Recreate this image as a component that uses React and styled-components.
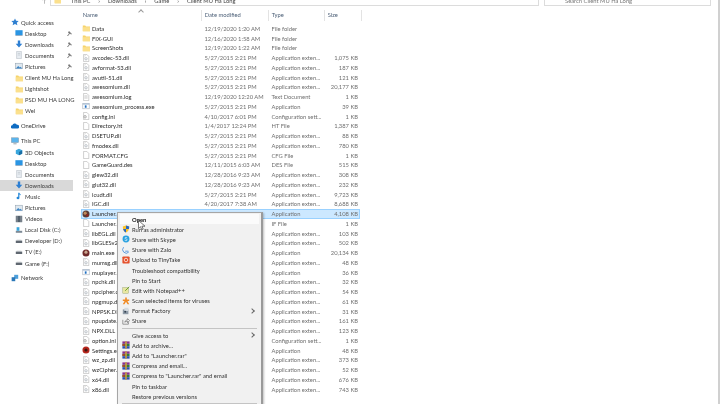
import React from "react";
import styled, { createGlobalStyle } from "styled-components";

const GlobalStyle = createGlobalStyle`
  html, body { margin: 0; padding: 0; background: #fff; }
  body { font-family: Lato, "Noto Sans", sans-serif; }
`;

const Frame = styled.div`
  position: relative;
  width: 720px;
  height: 404px;
  overflow: hidden;
  background: #fff;
  filter: blur(0.35px);
  font-size: 5.8px;
  color: #2b2b2b;
  border-right: 2px solid #d0d0d0;
  box-sizing: border-box;
`;

const TopBar = styled.div`
  display: flex;
  height: 6px;
  padding: 0 7px 0 42px;
  gap: 5px;
  overflow: hidden;
`;

const UpArrow = styled.span`
  width: 3px;
  line-height: 1px;
  color: #777;
`;

const AddressBar = styled.div`
  flex: 1;
  display: flex;
  align-items: flex-start;
  gap: 8px;
  padding: 0 4px 0 3px;
  border: solid #dcdcdc;
  border-width: 0 1px 1px 1px;
  color: #444;
  line-height: 1px;
  height: 5px;
  overflow: hidden;
`;

const CrumbIcon = styled.span`
  display: flex;
  margin: -3px 2px 0 0;
`;

const SearchBox = styled(AddressBar)`
  flex: 0 0 141px;
  padding-left: 20px;
  color: #777;
`;

const Main = styled.div`
  display: flex;
  height: 398px;
`;

const Sidebar = styled.nav`
  flex: 0 0 73px;
  min-width: 0;
  padding-top: 10.5px;
`;

const NavRow = styled.div`
  display: flex;
  align-items: center;
  gap: 2px;
  height: 11.1px;
  margin-top: ${p => p.$gap || 0}px;
  padding-left: ${p => (p.$top ? 11 : 15)}px;
  background: ${p => (p.$active ? "#d9d9d9" : "transparent")};
  white-space: nowrap;
  position: relative;
  color: #3a3a3a;
`;

const Pin = styled.svg`
  position: absolute;
  left: 67px;
  top: 3px;
`;

const Content = styled.section`
  flex: 1;
  min-width: 0;
  padding-left: 8px;
`;

const HeaderRow = styled.div`
  display: grid;
  grid-template-columns: 121px 67px 56px 37px;
  height: 14.5px;
  align-items: end;
  position: relative;
  color: #4d6078;
`;

const HeaderCell = styled.div`
  height: 11px;
  line-height: 10px;
  padding-left: ${p => (p.$first ? 1.7 : 2.7)}px;
  border-right: 1px solid #e3e3e3;
`;

const SortCaret = styled.span`
  position: absolute;
  left: 58px;
  top: 3.5px;
  width: 3px;
  height: 3px;
  border: solid #999;
  border-width: 1px 0 0 1px;
  transform: rotate(45deg);
`;

const FileList = styled.div`
  padding-top: 3px;
`;

const FileRow = styled.div`
  display: grid;
  grid-template-columns: 121px 67px 56px 35px;
  align-items: center;
  width: 279px;
  height: 9.76px;
  box-sizing: border-box;
  white-space: nowrap;
  color: #6f6f6f;
  background: ${p => (p.$selected ? "#cce8ff" : "transparent")};
  outline: ${p => (p.$selected ? "1px solid #99d1ff" : "none")};
  outline-offset: -1px;
`;

const NameCell = styled.div`
  display: flex;
  align-items: center;
  gap: 2px;
  padding-left: 1px;
  color: #2b2b2b;
`;

const Cell = styled.div`
  padding-left: 2.5px;
  overflow: hidden;
`;

const SizeCell = styled.div`
  text-align: right;
  padding-right: 2px;
`;

const Menu = styled.div`
  position: absolute;
  left: 117px;
  top: 212px;
  width: 146px;
  height: 200px;
  box-sizing: border-box;
  padding: 1px 2px;
  background: #f1f1f1;
  border: 1px solid #a6a6a6;
  border-right: 2px solid #9a9a9a;
  box-shadow: 1px 1px 2px rgba(0, 0, 0, 0.25);
`;

const MenuItem = styled.div`
  display: flex;
  align-items: center;
  height: 10.2px;
  position: relative;
  padding-left: 12px;
  white-space: nowrap;
  color: ${p => (p.$strong ? "#111" : "#333")};
  font-weight: ${p => (p.$strong ? 700 : 400)};
  background: ${p => (p.$strong ? "#fbfbfb" : "transparent")};
`;

const MenuIconSlot = styled.span`
  position: absolute;
  left: 2px;
  top: 1px;
  display: flex;
`;

const SubArrow = styled.span`
  position: absolute;
  right: 5px;
  top: 3px;
  width: 3px;
  height: 3px;
  border: solid #666;
  border-width: 1px 1px 0 0;
  transform: rotate(45deg);
`;

const MenuLine = styled.div`
  height: 1px;
  margin: 1.5px 2px;
  background: #c4c4c4;
`;

const Cursor = styled.svg`
  position: absolute;
  left: 138px;
  top: 220px;
`;

const iconPaths = {
  folder: <><path d="M1 2h3l1 1h5v6H1z" fill="#f6d36b" /><path d="M1 4h9v5H1z" fill="#fbe08d" /></>,
  dll: <><path d="M2 .5h4l2.5 2.5v6.5H2z" fill="#fff" stroke="#a9a9a9" strokeWidth=".7" /><circle cx="5" cy="6" r="1.5" fill="none" stroke="#9aa3ad" strokeWidth=".8" /><path d="M3 2h2M3 3.5h1" stroke="#bbb" strokeWidth=".5" /></>,
  file: <path d="M2 .5h4l2.5 2.5v6.5H2z" fill="#fff" stroke="#a9a9a9" strokeWidth=".7" />,
  text: <><path d="M2 .5h4l2.5 2.5v6.5H2z" fill="#fff" stroke="#a9a9a9" strokeWidth=".7" /><path d="M3 3.5h4M3 5h4M3 6.5h4" stroke="#999" strokeWidth=".5" /></>,
  app: <><rect x="1" y="2" width="8" height="6.5" fill="#fff" stroke="#9fa9b5" strokeWidth=".7" /><path d="M1 2h8v1.2H1z" fill="#9fb6cf" /><rect x="3.5" y="4.2" width="2.2" height="3" fill="#1f6fc2" /></>,
  ini: <><path d="M2 .5h4l2.5 2.5v6.5H2z" fill="#fff" stroke="#a9a9a9" strokeWidth=".7" /><circle cx="3.8" cy="6" r="1.7" fill="#ddd" stroke="#888" strokeWidth=".6" /></>,
  game: <><circle cx="5" cy="5" r="4.4" fill="#5a3d36" /><circle cx="4" cy="4" r="2" fill="#c08a5c" /><circle cx="6.5" cy="6.5" r="1.5" fill="#94251c" /></>,
  mainexe: <><circle cx="5" cy="5" r="4.4" fill="#702b2b" /><circle cx="5" cy="4" r="2" fill="#c8a48d" /></>,
  settings: <><circle cx="5" cy="5" r="4.4" fill="#b5261c" /><circle cx="5" cy="5" r="2" fill="#3b1512" /></>,
  star: <path d="M5 .5l1.4 3 3.2.3-2.4 2.1.8 3.3L5 7.4 2 9.2l.8-3.3L.4 3.8l3.2-.3z" fill="#2f7fd0" />,
  desktop: <><rect x=".5" y="1.5" width="9" height="6" fill="#2a95e3" /><rect x=".5" y="7.5" width="9" height="1" fill="#7f9db8" /></>,
  downloads: <path d="M3.5 .5h3v4.2h2.6L5 9.3.9 4.7h2.6z" fill="#2d7fd3" />,
  documents: <><path d="M2 .5h6v9H2z" fill="#e8edf2" stroke="#a8b2bc" strokeWidth=".6" /><path d="M3.5 3h3M3.5 5h3" stroke="#a8b2bc" strokeWidth=".6" /></>,
  pictures: <><rect x=".5" y="1.5" width="9" height="7" fill="#dfe8ef" stroke="#8a98a6" strokeWidth=".6" /><path d="M1 8l3-3 2 2 1-1 2 2z" fill="#3c84c4" /></>,
  cloud: <path d="M1.5 8a2 2 0 0 1 .2-4A3 3 0 0 1 7.300 3.500 2.300 2.300 0 0 1 8.500 8z" fill="#0f6cc2" />,
  pc: <><rect x=".5" y="1" width="9" height="6" fill="#5bb4ec" stroke="#7d8a96" strokeWidth=".5" /><path d="M3 8.500h4" stroke="#7d8a96" /></>,
  cube: <><path d="M5 .8l4 2v4.400l-4 2-4-2V2.800z" fill="#3aa6dc" /><path d="M5 5v4.200l4-2V2.800z" fill="#1a6ea5" /></>,
  music: <path d="M4 1h1.500c.3 1.300 2 1.500 2 3.300-.6-.7-1.200-1-2-1.100V7.500A1.800 1.500 0 1 1 4 6z" fill="#2487d8" />,
  videos: <><rect x="1" y="1" width="8" height="8" fill="#53606c" /><path d="M2 2h1v1H2zM2 4.500h1v1H2zM2 7h1v1H2zM7 2h1v1H7zM7 4.500h1v1H7zM7 7h1v1H7z" fill="#fff" /></>,
  localdisk: <><path d="M1 6h8v2.500H1z" fill="#7d8a96" /><path d="M2 1.500h3.500V6H2z" fill="#3aa6dc" /></>,
  drive: <><path d="M1 4.500h8v3H1z" fill="#5f6770" /><path d="M2 3.500h6v1H2z" fill="#a8aeb4" /></>,
  network: <><rect x="4" y="1" width="5" height="5" fill="#4c9fdb" /><rect x=".8" y="4" width="4.500" height="5" fill="#2b78b8" /></>,
  shield: <><path d="M5 .5l4 1.500c0 4-1.500 6.500-4 7.500C2.500 8.500 1 6 1 2z" fill="#ffc425" /><path d="M5 .5l4 1.500c0 1-.1 2-.4 3H5zM5 5v4.500C3 8.500 1.900 7 1.400 5z" fill="#2867c4" /></>,
  skype: <><circle cx="5" cy="5" r="4.300" fill="#2aa2e0" /><path d="M6.500 3.500C5.500 2.800 3.500 3 3.600 4s2.900.8 2.900 2-2.200 1.300-3.200.5" fill="none" stroke="#fff" strokeWidth=".8" /></>,
  zalo: <><path d="M2 1.500a4.300 4.300 0 1 0 6.500 6" fill="none" stroke="#2b7ed8" strokeWidth=".9" /><path d="M4 6.500h4" stroke="#2b7ed8" strokeWidth=".9" /></>,
  tiny: <><rect x=".5" y=".5" width="9" height="9" rx="1" fill="#e4512c" /><circle cx="5" cy="5" r="2.200" fill="none" stroke="#fff" strokeWidth=".9" /></>,
  notepad: <><rect x="1" y="2" width="7" height="7" fill="#e8e6a0" stroke="#8d9b5f" strokeWidth=".5" /><path d="M4 6l5-5" stroke="#6aa02e" strokeWidth="1.200" /></>,
  scan: <path d="M4 .5h2v2.500h3v2H6.800L9 9H7L5 6 3 9H1l2.200-4H1V3h3z" fill="#f08a24" />,
  factory: <><rect x="1" y="3" width="7" height="6" fill="#8d99a6" /><path d="M3 1h5v4H3z" fill="#d4dae0" /><circle cx="4" cy="6" r="1.200" fill="#34424f" /></>,
  share: <path d="M1 3.500V9h7V6.500M3.500 6.500C4 4.500 5.500 3.500 7 3.500V2l2.500 2.500L7 7V5.300C5.500 5.300 4.500 5.500 3.500 6.500z" fill="none" stroke="#555" strokeWidth=".7" />,
  rar: <><rect x=".5" y=".5" width="9" height="3" fill="#8a2f8f" /><rect x=".5" y="3.500" width="9" height="3" fill="#2e7d3a" /><rect x=".5" y="6.500" width="9" height="3" fill="#2c4fb0" /><rect x="4" y=".5" width="2" height="9" fill="#c9a13b" /><rect x=".5" y="4" width="3" height="2" fill="#c9372c" /></>,
};

function Icon({ kind, size = 8 }) {
  return <svg width={size} height={size} viewBox="0 0 10 10" style={{ flex: "none" }}>{iconPaths[kind]}</svg>;
}

const quick = [
  ["Desktop", "desktop", true],
  ["Downloads", "downloads", true],
  ["Documents", "documents", true],
  ["Pictures", "pictures", true],
  ["Client MU Ha Long", "folder"],
  ["Lightshot", "folder"],
  ["PSD MU HA LONG", "folder"],
  ["Wel", "folder"],
];

const thisPc = [
  ["3D Objects", "cube"],
  ["Desktop", "desktop"],
  ["Documents", "documents"],
  ["Downloads", "downloads"],
  ["Music", "music"],
  ["Pictures", "pictures"],
  ["Videos", "videos"],
  ["Local Disk (C:)", "localdisk"],
  ["Developer (D:)", "drive"],
  ["TV (E:)", "drive"],
  ["Game (F:)", "drive"],
];

const d15 = "5/27/2015 2:21 PM";
const ext = "Application exten...";
const files = [
  ["Data", "folder", "12/19/2020 1:20 AM", "File folder", ""],
  ["FIX-GUI", "folder", "12/16/2020 1:58 AM", "File folder", ""],
  ["ScreenShots", "folder", "12/19/2020 1:22 AM", "File folder", ""],
  ["avcodec-53.dll", "dll", d15, ext, "1,075 KB"],
  ["avformat-53.dll", "dll", d15, ext, "187 KB"],
  ["avutil-51.dll", "dll", d15, ext, "121 KB"],
  ["awesomium.dll", "dll", d15, ext, "20,177 KB"],
  ["awesomium.log", "text", "12/19/2020 12:20 AM", "Text Document", "1 KB"],
  ["awesomium_process.exe", "app", d15, "Application", "39 KB"],
  ["config.ini", "ini", "4/10/2017 6:01 PM", "Configuration sett...", "1 KB"],
  ["Directory.ht", "file", "1/4/2017 12:24 PM", "HT File", "1,387 KB"],
  ["DSETUP.dll", "dll", d15, ext, "88 KB"],
  ["fmodex.dll", "dll", d15, ext, "780 KB"],
  ["FORMAT.CFG", "file", d15, "CFG File", "1 KB"],
  ["GameGuard.des", "file", "12/11/2015 6:03 AM", "DES File", "515 KB"],
  ["glew32.dll", "dll", "12/28/2016 9:23 AM", ext, "308 KB"],
  ["glut32.dll", "dll", "12/28/2016 9:23 AM", ext, "232 KB"],
  ["icudt.dll", "dll", d15, ext, "9,723 KB"],
  ["IGC.dll", "dll", "4/20/2017 7:38 AM", ext, "8,688 KB"],
  ["Launcher.exe", "game", d15, "Application", "4,108 KB", true],
  ["Launcher.if", "file", d15, "IF File", "1 KB"],
  ["libEGL.dll", "dll", d15, ext, "103 KB"],
  ["libGLESv2.dll", "dll", d15, ext, "502 KB"],
  ["main.exe", "mainexe", d15, "Application", "20,134 KB"],
  ["mumsg.dll", "dll", d15, ext, "48 KB"],
  ["muplayer.exe", "app", d15, "Application", "36 KB"],
  ["npchk.dll", "dll", d15, ext, "32 KB"],
  ["npcipher.dll", "dll", d15, ext, "54 KB"],
  ["npgmup.dll", "dll", d15, ext, "61 KB"],
  ["NPPSK.DLL", "dll", d15, ext, "31 KB"],
  ["npupdate.dll", "dll", d15, ext, "161 KB"],
  ["NPX.DLL", "dll", d15, ext, "123 KB"],
  ["option.ini", "ini", d15, "Configuration sett...", "1 KB"],
  ["Settings.exe", "settings", d15, "Application", "48 KB"],
  ["wz_zp.dll", "dll", d15, ext, "373 KB"],
  ["wzCipher.dll", "dll", d15, ext, "52 KB"],
  ["x64.dll", "dll", d15, ext, "676 KB"],
  ["x86.dll", "dll", d15, ext, "743 KB"],
];

const menuTop = [
  ["Open", null],
  ["Run as administrator", "shield"],
  ["Share with Skype", "skype"],
  ["Share with Zalo", "zalo"],
  ["Upload to TinyTake", "tiny"],
  ["Troubleshoot compatibility", null],
  ["Pin to Start", null],
  ["Edit with Notepad++", "notepad"],
  ["Scan selected items for viruses", "scan"],
  ["Format Factory", "factory", true],
  ["Share", "share"],
];

const menuBottom = [
  ["Give access to", null, true],
  ["Add to archive...", "rar"],
  ['Add to "Launcher.rar"', "rar"],
  ["Compress and email...", "rar"],
  ['Compress to "Launcher.rar" and email', "rar"],
  ["Pin to taskbar", null],
  ["Restore previous versions", null],
];

function MenuEntry({ label, icon, sub }) {
  return (
    <MenuItem $strong={label === "Open"}>
      {icon && <MenuIconSlot><Icon kind={icon} /></MenuIconSlot>}
      {label}
      {sub && <SubArrow />}
    </MenuItem>
  );
}

export default function App() {
  return (
    <Frame>
      <GlobalStyle />
      <TopBar>
        <UpArrow>↑</UpArrow>
        <AddressBar>
          <CrumbIcon><Icon kind="folder" size={7} /></CrumbIcon>
          <span>This PC</span><span>›</span><span>Downloads</span><span>›</span><span>Game</span><span>›</span><span>Client MU Ha Long</span>
        </AddressBar>
        <SearchBox>Search Client MU Ha Long</SearchBox>
      </TopBar>
      <Main>
        <Sidebar>
          <NavRow $top><Icon kind="star" />Quick access</NavRow>
          {quick.map(([label, icon, pinned]) => (
            <NavRow key={label}>
              <Icon kind={icon} />
              {label}
              {pinned && <Pin width="5" height="5" viewBox="0 0 5 5"><path d="M2 0l3 3-1 .5-1-1L1 5 0 5l2-2.500-1-1z" fill="#777" /></Pin>}
            </NavRow>
          ))}
          <NavRow $top $gap={4}><Icon kind="cloud" />OneDrive</NavRow>
          <NavRow $top $gap={4}><Icon kind="pc" />This PC</NavRow>
          {thisPc.map(([label, icon]) => (
            <NavRow key={label} $active={label === "Downloads"}><Icon kind={icon} />{label}</NavRow>
          ))}
          <NavRow $top $gap={3.5}><Icon kind="network" />Network</NavRow>
        </Sidebar>
        <Content>
          <HeaderRow>
            <SortCaret />
            <HeaderCell $first>Name</HeaderCell>
            <HeaderCell>Date modified</HeaderCell>
            <HeaderCell>Type</HeaderCell>
            <HeaderCell>Size</HeaderCell>
          </HeaderRow>
          <FileList>
            {files.map(([name, icon, date, type, size, selected]) => (
              <FileRow key={name} $selected={selected}>
                <NameCell><Icon kind={icon} />{name}</NameCell>
                <Cell>{date}</Cell>
                <Cell>{type}</Cell>
                <SizeCell>{size}</SizeCell>
              </FileRow>
            ))}
          </FileList>
        </Content>
      </Main>
      <Menu>
        {menuTop.map(([label, icon, sub]) => <MenuEntry key={label} label={label} icon={icon} sub={sub} />)}
        <MenuLine />
        {menuBottom.map(([label, icon, sub]) => <MenuEntry key={label} label={label} icon={icon} sub={sub} />)}
        <MenuLine />
      </Menu>
      <Cursor width="8" height="11" viewBox="0 0 8 11">
        <path d="M.5.5v8l2-1.800 1.300 3 1.400-.6-1.300-2.900H7z" fill="#fff" stroke="#222" strokeWidth=".6" />
      </Cursor>
    </Frame>
  );
}
